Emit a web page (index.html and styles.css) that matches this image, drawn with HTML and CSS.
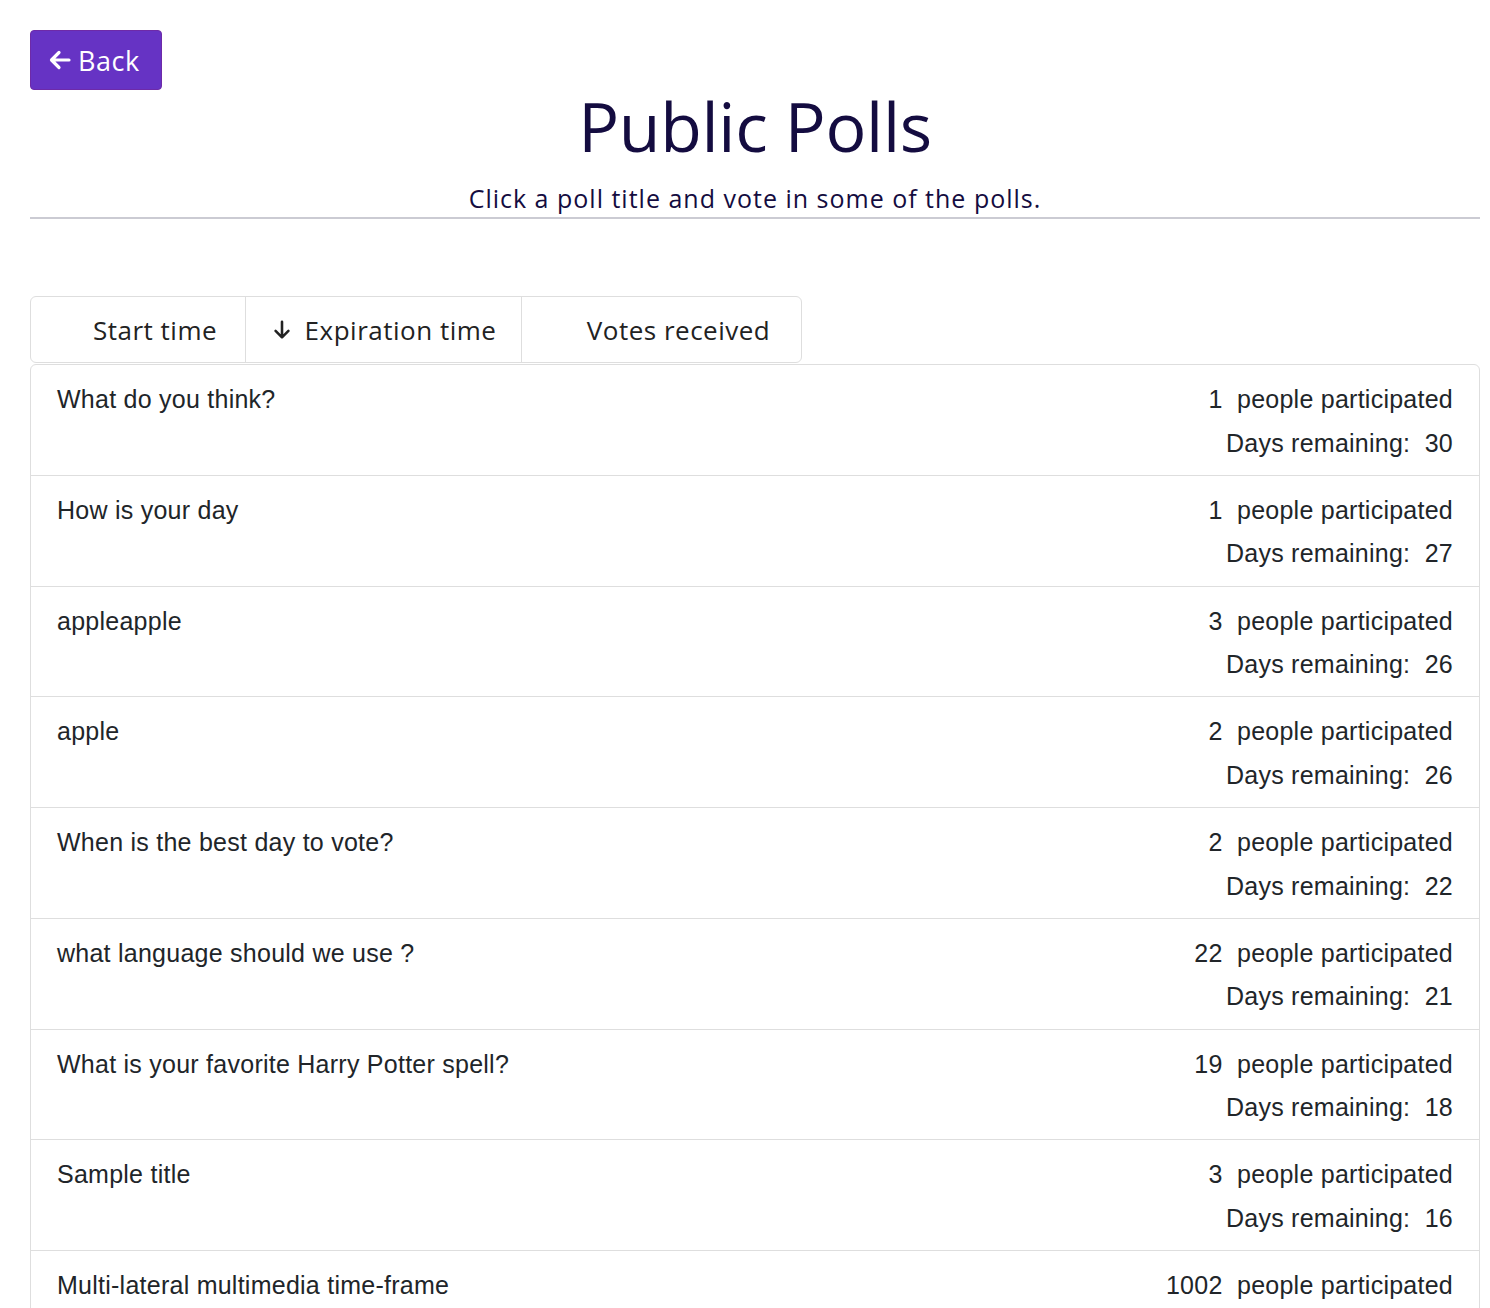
FILE: index.html
```html
<!DOCTYPE html>
<html lang="en">
<head>
<meta charset="utf-8">
<title>Public Polls</title>
<link rel="stylesheet" href="styles.css">
</head>
<body>
<div class="page">
  <div class="top">
    <button class="back-btn">
      <svg class="back-icon" viewBox="0 0 24 24" width="24" height="24"><path d="M21 12H4M11 4.5L3.5 12l7.5 7.5" fill="none" stroke="#fff" stroke-width="3.2" stroke-linecap="round" stroke-linejoin="round"/></svg>
      <span>Back</span>
    </button>
  </div>
  <header class="header">
    <h1 class="title">Public Polls</h1>
    <p class="subtitle">Click a poll title and vote in some of the polls.</p>
  </header>
  <div class="tabs">
    <div class="tab"><span class="tab-icon"></span><span>Start time</span></div>
    <div class="tab"><span class="tab-icon"><svg viewBox="0 0 24 24" width="22" height="22"><path d="M12 3v17M5 13l7 7 7-7" fill="none" stroke="#222" stroke-width="2.8" stroke-linecap="round" stroke-linejoin="round"/></svg></span><span>Expiration time</span></div>
    <div class="tab"><span class="tab-icon"></span><span>Votes received</span></div>
  </div>
  <ul class="polls">
    <li class="poll"><div class="poll-title">What do you think?</div><div class="poll-meta"><div>1&nbsp; people participated</div><div>Days remaining:&nbsp; 30</div></div></li>
    <li class="poll"><div class="poll-title">How is your day</div><div class="poll-meta"><div>1&nbsp; people participated</div><div>Days remaining:&nbsp; 27</div></div></li>
    <li class="poll"><div class="poll-title">appleapple</div><div class="poll-meta"><div>3&nbsp; people participated</div><div>Days remaining:&nbsp; 26</div></div></li>
    <li class="poll"><div class="poll-title">apple</div><div class="poll-meta"><div>2&nbsp; people participated</div><div>Days remaining:&nbsp; 26</div></div></li>
    <li class="poll"><div class="poll-title">When is the best day to vote?</div><div class="poll-meta"><div>2&nbsp; people participated</div><div>Days remaining:&nbsp; 22</div></div></li>
    <li class="poll"><div class="poll-title">what language should we use ?</div><div class="poll-meta"><div>22&nbsp; people participated</div><div>Days remaining:&nbsp; 21</div></div></li>
    <li class="poll"><div class="poll-title">What is your favorite Harry Potter spell?</div><div class="poll-meta"><div>19&nbsp; people participated</div><div>Days remaining:&nbsp; 18</div></div></li>
    <li class="poll"><div class="poll-title">Sample title</div><div class="poll-meta"><div>3&nbsp; people participated</div><div>Days remaining:&nbsp; 16</div></div></li>
    <li class="poll"><div class="poll-title">Multi-lateral multimedia time-frame</div><div class="poll-meta"><div>1002&nbsp; people participated</div><div>Days remaining:&nbsp; 14</div></div></li>
  </ul>
</div>
</body>
</html>
```
FILE: styles.css
```css
* { box-sizing: border-box; }
html, body { margin: 0; padding: 0; background: #fff; }
body { font-family: "Liberation Sans", Arial, sans-serif; color: #212529; }
.page { padding: 30px 10px 0 30px; }
.top { display: flex; }
.back-btn {
  display: flex; align-items: center; gap: 6px;
  height: 60px; width: 132px; padding: 0 0 0 17px;
  background: #6633c4; border: 1px solid #6e2aa8; border-radius: 4px;
  color: #fff; font-family: "Open Sans", sans-serif; font-size: 27px; font-weight: 500; letter-spacing: 0.5px;
}
.back-icon { display: block; }
.header { text-align: center; border-bottom: 2px solid #cbcbd3; margin-top: -4px; padding-bottom: 2px; }
.title { margin: 0; font-family: "Open Sans", sans-serif; font-weight: 500; font-size: 68px; line-height: 80px; color: #140c40; letter-spacing: -0.3px; }
.subtitle { margin: 15px 0 0; font-family: "Open Sans", sans-serif; font-size: 25px; line-height: 34px; color: #140c40; letter-spacing: 1px; }
.tabs { display: flex; margin-top: 77px; width: 772px; border: 1px solid #dedede; border-radius: 6px; height: 67px; }
.tab { display: flex; align-items: center; justify-content: center; padding: 0 16px; white-space: nowrap; font-family: "Open Sans", sans-serif; font-size: 26px; letter-spacing: 0.5px; color: #222; }
.tab + .tab { border-left: 1px solid #dedede; }
.tab:nth-child(1) { width: 214px; }
.tab:nth-child(2) { width: 276px; }
.tab:nth-child(3) { flex: 1; }
.tab-icon { width: 22px; height: 22px; margin-right: 12px; display: flex; flex: none; }
.polls { list-style: none; margin: 1px 0 0; padding: 0; border: 1px solid #dedede; border-radius: 6px; }
.poll { display: flex; justify-content: space-between; padding: 13px 26px 9.75px; border-bottom: 1px solid #dedede; font-size: 25px; letter-spacing: 0.25px; line-height: 43.5px; }
.poll-meta { text-align: right; }
```
